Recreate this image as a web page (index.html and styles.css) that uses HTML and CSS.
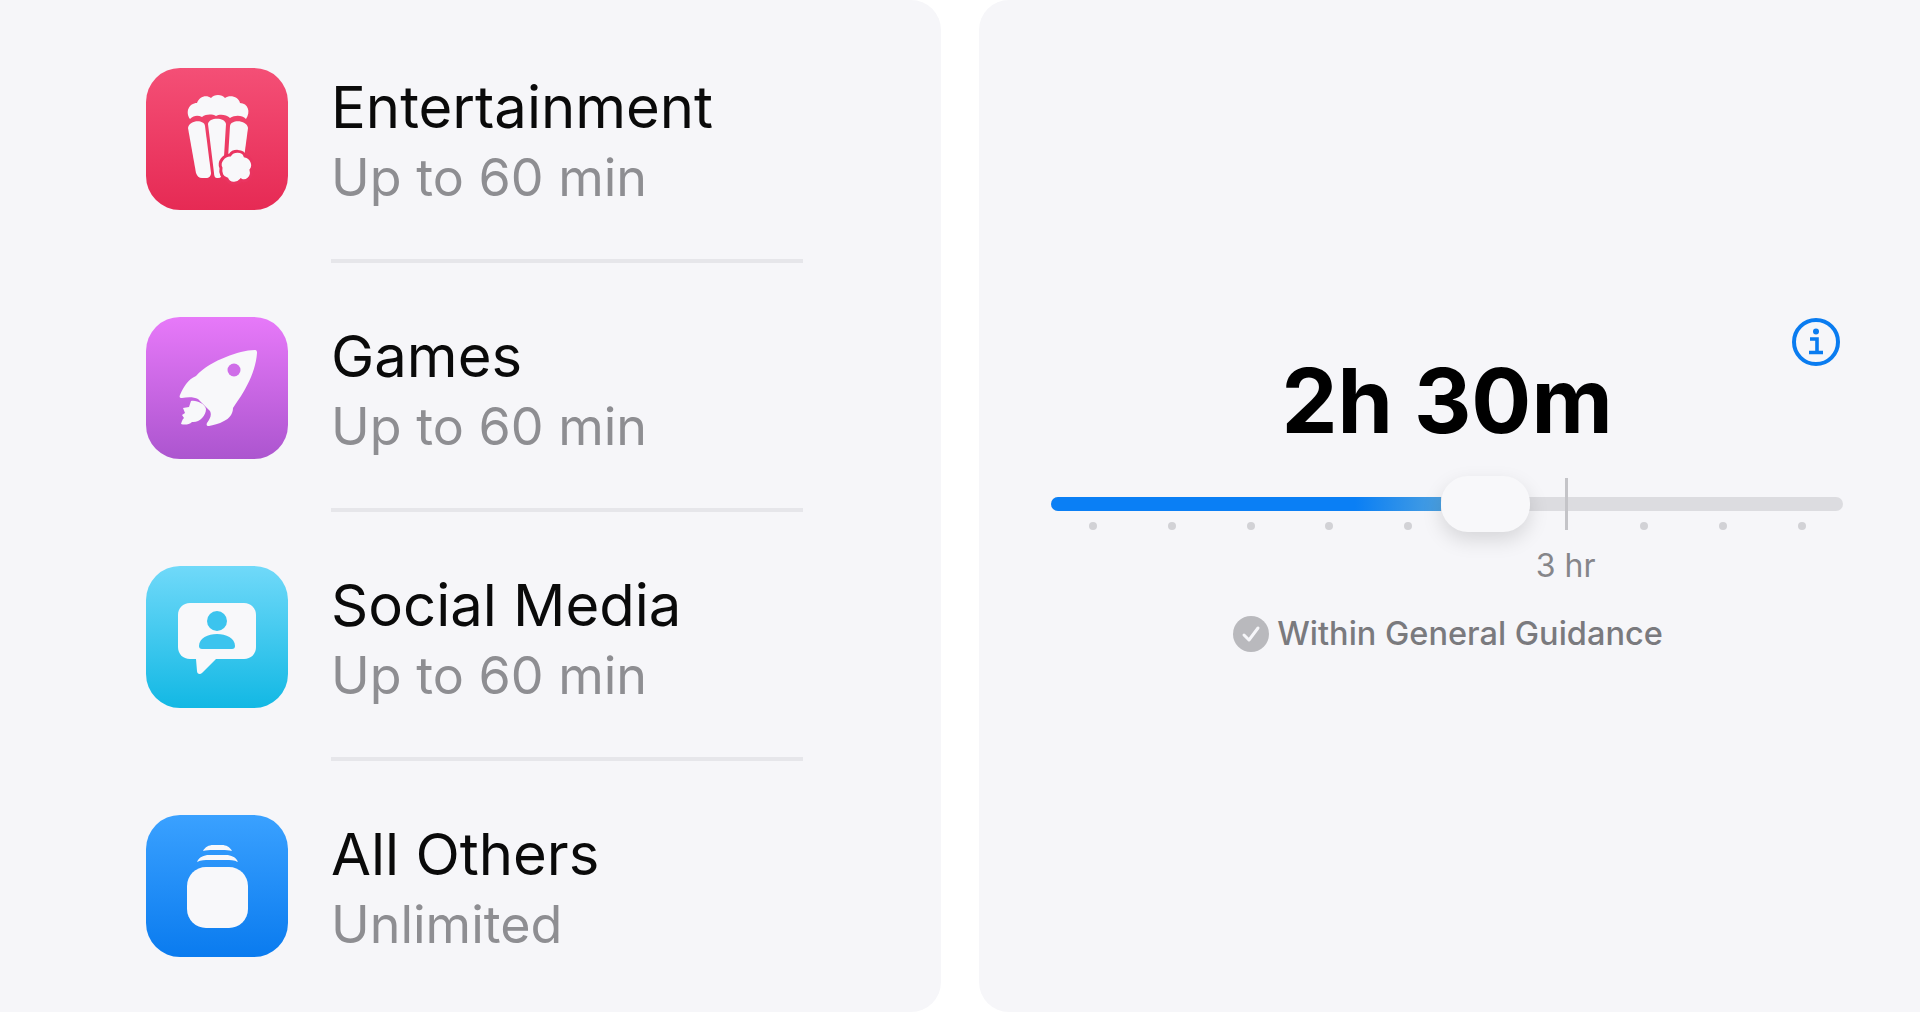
FILE: index.html
```html
<!DOCTYPE html>
<html lang="en">
<head>
    <meta charset="UTF-8">
    <title>Screen Time Limits</title>
    <link rel="stylesheet" href="styles.css">
</head>
<body>

<div class="page">
    <section class="panel list-panel">
        <div class="row">
            <div class="app-icon icon-red">
                <svg viewBox="0 0 142 142" width="142" height="142">
                    <!-- popcorn top -->
                    <path fill="#f8f8fa" d="M44,51 C39,44 43,35 51,35 C53,29 60,26 65,30 C68,26 76,26 79,30 C84,26 93,29 94,35 C102,35 105,44 100,51 C96,47 89,47 84,50 C80,46 73,46 70,48 C66,46 60,46 56,49 C52,47 48,47 44,51 Z"/>
                    <!-- bucket stripes -->
                    <path fill="#f8f8fa" d="M42,60 C43,52 58,51 59,58 L65,105 C65,108 63,110 60,110 H56 C53,110 51,108 50,105 Z"/>
                    <path fill="#f8f8fa" d="M62,56 C63,49 79,49 80,56 L77,105 C76,108 75,110 72,110 H71 C69,110 68,108 68,105 Z"/>
                    <path fill="#f8f8fa" d="M84,58 C85,51 101,52 102,60 L98,90 H82 Z"/>
                    <!-- loose kernel -->
                    <path fill="#f8f8fa" stroke="#ea3460" stroke-width="3" d="M75,100 C72,94 78,87 84,87 C87,82 97,82 99,88 C105,89 109,97 105,102 C107,109 100,115 95,112 C91,117 83,116 81,111 C76,110 74,105 75,100 Z"/>
                </svg>
            </div>
            <div class="row-text">
                <div class="row-title">Entertainment</div>
                <div class="row-sub">Up to 60 min</div>
            </div>
        </div>
        <div class="row">
            <div class="app-icon icon-purple">
                <svg viewBox="0 0 142 142" width="142" height="142">
                    <path fill="#f8f8fa" d="M109,33 C111,33 111,35 111,36 C110,50 104,64 98,74 C94,81 90,86 87,91 C87,97 83,102 78,104 C73,107 67,108 63,109 C61,109 60,108 61,106 C64,102 66,98 64,94 L52,82 C48,80 42,80 36,81 C34,81 33,80 34,78 C37,71 42,62 50,59 C57,51 69,44 80,40 C90,36 100,33 109,33 Z"/>
                    <circle cx="88" cy="53" r="6.5" fill="#cf6ee8"/>
                    <path fill="#f8f8fa" d="M45,84 C51,83 59,87 60,92 C60,99 53,106 46,105 C43,108 38,108 35,107 C36,104 36,103 38,101 L36,98 L39,96 L37,91 L43,90 Z"/>
                </svg>
            </div>
            <div class="row-text">
                <div class="row-title">Games</div>
                <div class="row-sub">Up to 60 min</div>
            </div>
        </div>
        <div class="row">
            <div class="app-icon icon-cyan">
                <svg viewBox="0 0 142 142" width="142" height="142">
                    <path fill="#f8f8fa" d="M44,37 H98 C105,37 110,42 110,49 V81 C110,88 105,93 98,93 H70 L56,107 C54,109 51,108 51,105 L50,93 H44 C37,93 32,88 32,81 V49 C32,42 37,37 44,37 Z"/>
                    <circle cx="71" cy="55" r="10" fill="#3cc4ee"/>
                    <path fill="#3cc4ee" d="M53,80 C53,72 62,68 71,68 C80,68 89,72 89,80 C89,82 88,83 86,83 H56 C54,83 53,82 53,80 Z"/>
                </svg>
            </div>
            <div class="row-text">
                <div class="row-title">Social Media</div>
                <div class="row-sub">Up to 60 min</div>
            </div>
        </div>
        <div class="row">
            <div class="app-icon icon-blue">
                <svg viewBox="0 0 142 142" width="142" height="142">
                    <rect x="41" y="52" width="61" height="61" rx="19" fill="#f8f8fa"/>
                    <path fill="#f8f8fa" d="M51,47 C53,42 58,40 63,40 H80 C85,40 90,42 92,47 C88,45 84,45 80,45 H63 C59,45 55,45 51,47 Z"/>
                    <path fill="#f8f8fa" d="M57,36 C59,32 63,30 67,30 H76 C80,30 84,32 86,36 C83,35 80,35 76,35 H67 C63,35 60,35 57,36 Z"/>
                </svg>
            </div>
            <div class="row-text">
                <div class="row-title">All Others</div>
                <div class="row-sub">Unlimited</div>
            </div>
        </div>
    </section>

    <section class="panel time-panel">
        <div class="info-line">
            <svg viewBox="0 0 48 48" width="48" height="48">
                <circle cx="24" cy="24" r="22" fill="none" stroke="#0a7cf0" stroke-width="4"/>
                <circle cx="24" cy="13.5" r="3" fill="#0a7cf0"/>
                <path fill="none" stroke="#0a7cf0" stroke-width="3.6" d="M18,21 H25 V34 M17,34.5 H31"/>
            </svg>
        </div>
        <div class="time-value">2h 30m</div>
        <div class="slider">
            <div class="track">
                <div class="track-fill" style="width: 390px"></div>
                <div class="thumb"></div>
            </div>
            <div class="scale">
                <span class="dot"></span>
                <span class="dot"></span>
                <span class="dot"></span>
                <span class="dot"></span>
                <span class="dot"></span>
                <span class="dot"></span>
                <span class="dot major">
                    <span class="major-line"></span>
                    <span class="major-label">3 hr</span>
                </span>
                <span class="dot"></span>
                <span class="dot"></span>
                <span class="dot"></span>
            </div>
        </div>
        <div class="guidance">
            <svg viewBox="0 0 36 36" width="36" height="36">
                <circle cx="18" cy="18" r="18" fill="#b9b9bd"/>
                <path fill="none" stroke="#f6f6f9" stroke-width="3" stroke-linecap="round" stroke-linejoin="round" d="M11,19 L16,24 L25,12"/>
            </svg>
            <span>Within General Guidance</span>
        </div>
    </section>
</div>

</body>
</html>
```

FILE: styles.css
```css
* {
    box-sizing: border-box;
}
body {
    margin: 0;
    background-color: #ffffff;
    font-family: Inter, "Liberation Sans", sans-serif;
    overflow: hidden;
}
.page {
    display: flex;
    justify-content: space-between;
    height: 1012px;
}
.panel {
    width: 941px;
    height: 1012px;
    background-color: #f6f6f9;
}
.list-panel {
    border-radius: 0 30px 30px 0;
    padding: 13px 0 0 146px;
}
.time-panel {
    border-radius: 30px 0 0 30px;
    padding: 318px 77px 0 72px;
}

/* left list */
.row {
    display: flex;
    height: 249px;
}
.app-icon {
    width: 142px;
    height: 142px;
    margin-top: 55px;
    border-radius: 34px;
    flex-shrink: 0;
}
.app-icon svg {
    display: block;
}
.icon-red {
    background: linear-gradient(180deg, #f44f76, #e62a54);
}
.icon-purple {
    background: linear-gradient(180deg, #e779f9, #ac55cf);
}
.icon-cyan {
    background: linear-gradient(180deg, #70d9f9, #12b8e4);
}
.icon-blue {
    background: linear-gradient(180deg, #3aa1ff, #0a7bef);
}
.row-text {
    width: 472px;
    height: 250px;
    margin-left: 43px;
    padding-top: 63px;
    border-bottom: 4px solid #e6e6ea;
}
.row:last-child .row-text {
    border-bottom: none;
}
.row-title {
    font-size: 58px;
    line-height: 62px;
    color: #0a0a0a;
}
.row-sub {
    margin-top: 9px;
    font-size: 52px;
    line-height: 62px;
    color: #8e8e92;
}

/* right panel */
.info-line {
    display: flex;
    justify-content: flex-end;
    height: 48px;
    margin-right: 3px;
}
.time-value {
    margin-top: -9px;
    text-align: center;
    font-size: 89px;
    line-height: 88px;
    font-weight: 700;
    color: #000000;
}
.slider {
    margin-top: 52px;
}
.track {
    position: relative;
    height: 14px;
    border-radius: 7px;
    background-color: #dcdce0;
}
.track-fill {
    height: 14px;
    border-radius: 7px 0 0 7px;
    background: linear-gradient(90deg, #0a7ff5 78%, #4a9fe0 100%);
}
.thumb {
    position: absolute;
    left: 390px;
    top: -21px;
    width: 89px;
    height: 56px;
    border-radius: 27px;
    background-color: #f8f8fa;
    box-shadow: 0 8px 20px rgba(0, 0, 0, 0.13);
    z-index: 2;
}
.scale {
    display: flex;
    justify-content: space-between;
    margin-top: 11px;
    padding: 0 37px 0 38px;
}
.dot {
    position: relative;
    width: 8px;
    height: 8px;
    border-radius: 50%;
    background-color: #d2d2d6;
}
.dot.major {
    background: none;
}
.major-line {
    position: absolute;
    left: 3px;
    top: -44px;
    width: 3px;
    height: 52px;
    background-color: #c4c4c8;
}
.major-label {
    position: absolute;
    left: -46px;
    top: 24px;
    width: 100px;
    text-align: center;
    font-size: 32px;
    line-height: 40px;
    color: #86868a;
}
.guidance {
    display: flex;
    justify-content: center;
    align-items: center;
    gap: 8px;
    margin-top: 84px;
    padding-left: 2px;
    font-size: 32.5px;
    font-weight: 500;
    line-height: 40px;
    color: #7a7a7e;
}
```
